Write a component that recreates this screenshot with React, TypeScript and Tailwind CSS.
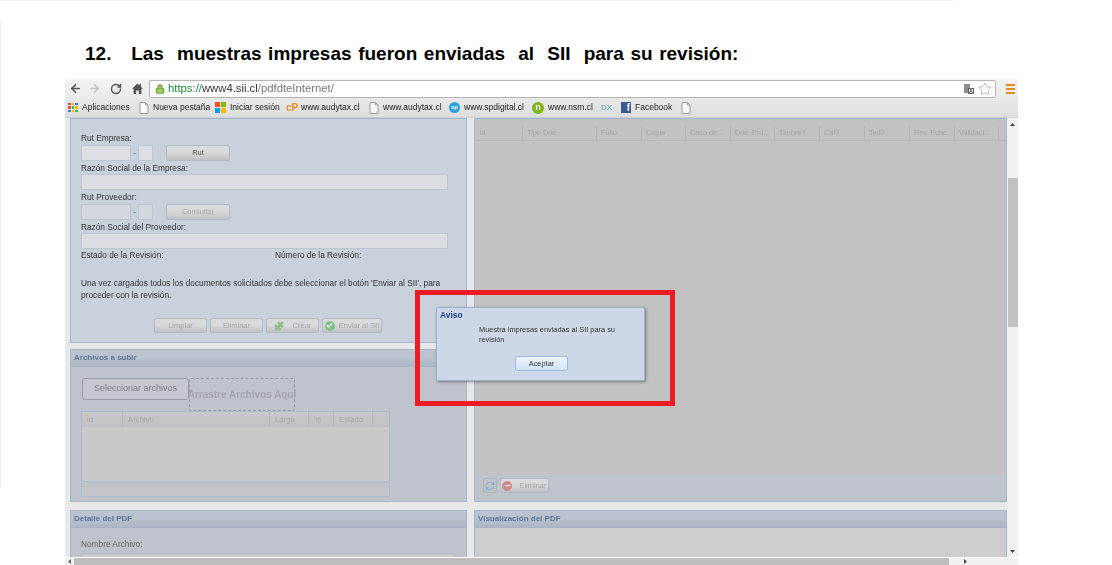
import { ArrowLeft, ArrowRight, Check, Lock, Minus, Puzzle, RefreshCw, RotateCw, Star } from "lucide-react";

const UI = "font-['Liberation_Sans',Arial,sans-serif]";

const gridCols = [
  { label: "id", cls: "w-[47px]" },
  { label: "Tipo Doc.", cls: "w-[74px]" },
  { label: "Folio", cls: "w-[45px]" },
  { label: "Copia", cls: "w-[44px]" },
  { label: "Caso de...", cls: "w-[45px]" },
  { label: "Doc. Pru...", cls: "w-[44px]" },
  { label: "Timbre?", cls: "w-[45px]" },
  { label: "Caf?", cls: "w-[45px]" },
  { label: "Ted?", cls: "w-[45px]" },
  { label: "Rev. Func.", cls: "w-[45px]" },
  { label: "Validaci...", cls: "w-[44px]" },
];

const uploadCols = [
  { label: "id", cls: "w-[41px]" },
  { label: "Archivo", cls: "w-[147px]" },
  { label: "Largo", cls: "w-[39px]" },
  { label: "%", cls: "w-[25px]" },
  { label: "Estado", cls: "w-[39px]" },
  { label: "", cls: "w-[17px]" },
];

function DocIcon() {
  return (
    <svg width="10" height="12" viewBox="0 0 10 12" className="shrink-0">
      <path d="M1 .5h5.5L9 3v8.5H1z" fill="#fafafa" stroke="#9a9a9a" />
      <path d="M6.5.5V3H9" fill="none" stroke="#9a9a9a" />
    </svg>
  );
}

function Bookmark({ icon, text, cls }: { icon: React.ReactNode; text: string; cls: string }) {
  return (
    <div className={`flex items-center gap-[4px] shrink-0 ${cls}`}>
      {icon}
      <span className="text-[8.5px] text-[#222] whitespace-nowrap">{text}</span>
    </div>
  );
}

function AppsIcon() {
  const colors = ["#e8453c", "#f4b400", "#3a7ee0", "#e8453c", "#3cba54", "#f4b400", "#3a7ee0", "#f4b400", "#3cba54"];
  return (
    <div className="grid grid-cols-3 gap-[1px] w-[10px] h-[10px] shrink-0">
      {colors.map((c, i) => (
        <div key={i} className="w-[2.5px] h-[2.5px]" style={{ background: c }} />
      ))}
    </div>
  );
}

function WinIcon() {
  return (
    <div className="grid grid-cols-2 gap-[1px] w-[11px] h-[11px] shrink-0">
      <div className="bg-[#f25022]" />
      <div className="bg-[#7fba00]" />
      <div className="bg-[#00a4ef]" />
      <div className="bg-[#ffb900]" />
    </div>
  );
}

function HomeIcon() {
  return (
    <svg width="11" height="11" viewBox="0 0 11 11" className="ml-[10px] shrink-0">
      <path d="M5.5.5 0 5.8h1.6V11h2.6V7.4h2.6V11h2.6V5.8H11L9 3.8V1H7.6v1.4z" fill="#555" />
    </svg>
  );
}

function TranslateIcon() {
  return (
    <div className="relative w-[10px] h-[10px]">
      <div className="absolute left-0 top-0 w-[6px] h-[9px] bg-[#8d8d8d]" />
      <div className="absolute right-0 bottom-0 w-[6px] h-[6px] border border-[#666] bg-[#e4e4e4] text-[5px] leading-[5px] text-center text-[#333]">A</div>
    </div>
  );
}

function Toolbar() {
  return (
    <div className="h-[19px] bg-gradient-to-b from-[#f3f3f3] to-[#ebebeb] flex items-center">
      <ArrowLeft size={13} strokeWidth={3} className="ml-[4px] text-[#555]" />
      <ArrowRight size={13} strokeWidth={3} className="ml-[6px] text-[#c4c4c4]" />
      <RotateCw size={12} strokeWidth={3} className="ml-[9px] text-[#555]" />
      <HomeIcon />
      <div className="ml-[6px] w-[847px] h-[18px] bg-white border border-[#b5b5b5] rounded-[2px] flex items-center pl-[5px]">
        <Lock size={10} strokeWidth={2.5} fill="#9ccc65" className="text-[#6f9e3a]" />
        <span className="ml-[3px] text-[11.3px] leading-none whitespace-nowrap">
          <span className="text-[#1e8e3e]">https://</span>
          <span className="text-[#333]">www4.sii.cl</span>
          <span className="text-[#777]">/pdfdteInternet/</span>
        </span>
        <div className="ml-auto mr-[3px] flex items-center gap-[4px]">
          <TranslateIcon />
          <Star size={14} strokeWidth={1} className="text-[#888]" />
        </div>
      </div>
      <div className="ml-[10px] w-[9px] flex flex-col gap-[2px]">
        <div className="h-[2px] bg-[#e98a1d]" />
        <div className="h-[2px] bg-[#e98a1d]" />
        <div className="h-[2px] bg-[#e98a1d]" />
      </div>
    </div>
  );
}

function BookmarksBar() {
  return (
    <div className="h-[20px] bg-gradient-to-b from-[#e9e9e9] to-[#dedede] flex items-center pl-[3px] border-b border-[#d0d0d0]">
      <Bookmark cls="w-[71px]" icon={<AppsIcon />} text="Aplicaciones" />
      <Bookmark cls="w-[76px]" icon={<DocIcon />} text="Nueva pestaña" />
      <Bookmark cls="w-[71px]" icon={<WinIcon />} text="Iniciar sesión" />
      <Bookmark
        cls="w-[83px]"
        icon={<span className="text-[10px] font-bold text-[#f08a1d] leading-none w-[11px]">cP</span>}
        text="www.audytax.cl"
      />
      <Bookmark cls="w-[80px]" icon={<DocIcon />} text="www.audytax.cl" />
      <Bookmark
        cls="w-[83px]"
        icon={<div className="w-[11px] h-[11px] rounded-full bg-[#2a9fe0] text-white text-[6px] font-bold leading-[11px] text-center">sp</div>}
        text="www.spdigital.cl"
      />
      <Bookmark
        cls="w-[69px]"
        icon={<div className="w-[12px] h-[12px] rounded-full bg-[#7cb518] text-white text-[9px] font-bold leading-[11px] text-center">n</div>}
        text="www.nsm.cl"
      />
      <div className="w-[20px] shrink-0 text-[8px] text-[#45aacb] leading-none">DX</div>
      <Bookmark
        cls="w-[60px]"
        icon={<div className="w-[10px] h-[11px] bg-[#3b5998] text-white text-[10px] font-bold leading-[12px] text-right pr-[1px]">f</div>}
        text="Facebook"
      />
      <DocIcon />
    </div>
  );
}

function FlatButton({ label, cls, disabled, icon }: { label: string; cls: string; disabled?: boolean; icon?: React.ReactNode }) {
  return (
    <div className={`rounded-[2px] border border-[#b4bac3] bg-gradient-to-b from-[#d9dcdf] via-[#d6d8da] to-[#bfc2c5] flex items-center justify-center gap-[4px] text-[7.5px] whitespace-nowrap ${disabled ? "text-[#a3a6aa]" : "text-[#555]"} ${cls}`}>
      {icon}
      <span>{label}</span>
    </div>
  );
}

function Label({ children, cls }: { children: React.ReactNode; cls: string }) {
  return <div className={`text-[8.3px] leading-[12px] text-[#333] ${cls}`}>{children}</div>;
}

function RutRow({ button, disabled, cls }: { button: string; disabled?: boolean; cls: string }) {
  const field = disabled ? "bg-[#d3d8df]" : "bg-[#dce0e5]";
  return (
    <div className={`flex items-center h-[16px] ${cls}`}>
      <div className={`w-[50px] h-[16px] border border-[#bdc5d0] ${field}`} />
      <span className="w-[7px] text-center text-[8px] text-[#555]">-</span>
      <div className={`w-[15px] h-[16px] border border-[#bdc5d0] ${field}`} />
      <FlatButton label={button} disabled={disabled} cls="ml-[13px] w-[64px] h-[16px]" />
    </div>
  );
}

function TopPanel() {
  return (
    <div className="h-[225px] bg-[#c9d1dd] border border-[#a3b6d1] pl-[10px] pr-[16px] pt-[13px]">
      <Label cls="">Rut Empresa:</Label>
      <RutRow button="Rut" cls="mt-[1px]" />
      <Label cls="mt-[1px]">Razón Social de la Empresa:</Label>
      <div className="h-[16px] w-[367px] bg-[#dadee3] border border-[#bdc5d0]" />
      <Label cls="mt-[1px]">Rut Proveedor:</Label>
      <RutRow button="Consultar" disabled cls="mt-[1px]" />
      <Label cls="mt-[1px]">Razón Social del Proveedor:</Label>
      <div className="h-[16px] w-[367px] bg-[#dadee3] border border-[#bdc5d0]" />
      <div className="flex">
        <Label cls="w-[194px]">Estado de la Revisión:</Label>
        <Label cls="">Número de la Revisión:</Label>
      </div>
      <Label cls="mt-[16px] w-[370px] leading-[10px]">
        Una vez cargados todos los documentos solicitados debe seleccionar el botón 'Enviar al SII', para proceder con la revisión.
      </Label>
      <div className="mt-[17px] ml-[73px] flex gap-[3px]">
        <FlatButton label="Limpiar" disabled cls="w-[53px] h-[15px]" />
        <FlatButton label="Eliminar" disabled cls="w-[53px] h-[15px]" />
        <FlatButton
          label="Crear"
          disabled
          cls="w-[53px] h-[15px]"
          icon={<Puzzle size={10} fill="#8fbf8a" strokeWidth={1} className="text-[#7fae7a] mr-[5px]" />}
        />
        <FlatButton
          label="Enviar al SII"
          disabled
          cls="w-[60px] h-[15px] gap-[3px]"
          icon={
            <div className="w-[10px] h-[10px] rounded-full bg-[#7fc08a] flex items-center justify-center">
              <Check size={7} strokeWidth={4} className="text-white" />
            </div>
          }
        />
      </div>
    </div>
  );
}

function PanelHeader({ title }: { title: string }) {
  return (
    <div className="h-[17px] bg-gradient-to-b from-[#bcc4d0] via-[#b9c2cf] to-[#abb6c6] flex items-center pl-[3px] border-b border-[#a8b4c6]">
      <span className="text-[8px] font-bold text-[#5a7396] whitespace-nowrap">{title}</span>
    </div>
  );
}

function UploadPanel() {
  return (
    <div className="h-[153px] bg-[#bfc3cc] border border-[#a9b4c4] overflow-hidden">
      <PanelHeader title="Archivos a subir" />
      <div className="pl-[10px]">
        <div className="flex items-start pt-[11px] h-[44px]">
          <div className="w-[107px] h-[22px] ml-[1px] border border-[#969ca6] rounded-[3px] bg-[#c5c8ce] flex items-center justify-center text-[9px] text-[#7d7f84]">
            Seleccionar archivos
          </div>
          <div className="w-[106px] h-[33px] border border-dashed border-[#969ca6] rounded-[2px] flex items-center justify-center text-[10px] font-bold text-[#a3a6ab] whitespace-nowrap">
            Arrastre Archivos Aquí
          </div>
        </div>
        <div className="w-[309px] h-[86px] border border-[#aebad0] bg-[#c9c9c9] flex flex-col">
          <div className="h-[15px] flex bg-gradient-to-b from-[#c8c9ca] to-[#bfc1c4] border-b border-[#bdbfc2]">
            {uploadCols.map((c) => (
              <div key={c.label} className={`${c.cls} shrink-0 pl-[5px] border-r border-[#b6b8bb] text-[7.8px] leading-[15px] text-[#a5a7aa]`}>
                {c.label}
              </div>
            ))}
          </div>
          <div className="flex-1" />
          <div className="h-[15px] bg-gradient-to-b from-[#bdc1c7] to-[#c4c7cb] border-t border-[#a8b8d2]" />
        </div>
      </div>
    </div>
  );
}

function DetailPanel() {
  return (
    <div className="flex-1 bg-[#bfc3cc] border border-b-0 border-[#a9b4c4] overflow-hidden">
      <PanelHeader title="Detalle del PDF" />
      <Label cls="ml-[10px] mt-[10px] text-[#666]">Nombre Archivo:</Label>
      <div className="ml-[10px] mt-[3px] w-[374px] h-[10px] bg-[#c9cacc] border border-[#b8bcc4]" />
    </div>
  );
}

function GridPanel() {
  return (
    <div className="h-[384px] bg-[#bfc3cc] border border-[#a3b6d1] flex flex-col">
      <div className="h-[355px] ml-[1px] bg-[#c2c2c2] pt-[7px]">
        <div className="h-[15px] flex border-b border-[#b8b8b8]">
          {gridCols.map((c) => (
            <div key={c.label} className={`${c.cls} shrink-0 pl-[4px] border-r border-[#b5b5b5] text-[7.3px] leading-[14px] text-[#a3a3a3] whitespace-nowrap`}>
              {c.label}
            </div>
          ))}
        </div>
      </div>
      <div className="flex items-center gap-[3px] pl-[8px] mt-[4px]">
        <div className="w-[14px] h-[15px] border border-[#aeb2b9] rounded-[2px] flex items-center justify-center">
          <RefreshCw size={10} strokeWidth={2} className="text-[#7ea6cf]" />
        </div>
        <FlatButton
          label="Eliminar"
          disabled
          cls="w-[49px] h-[15px]"
          icon={
            <div className="w-[10px] h-[10px] rounded-full bg-[#d08a85] flex items-center justify-center mr-[3px]">
              <Minus size={7} strokeWidth={4} className="text-white" />
            </div>
          }
        />
      </div>
    </div>
  );
}

function ViewerPanel() {
  return (
    <div className="flex-1 bg-[#cdcdcd] border border-b-0 border-[#a3b6d1] overflow-hidden">
      <PanelHeader title="Visualización del PDF" />
    </div>
  );
}

function VScrollbar() {
  return (
    <div className="w-[11px] bg-[#f1f1f1] flex flex-col items-center">
      <svg width="7" height="5" viewBox="0 0 7 5" className="mt-[4px]">
        <path d="M3.5 1 6 4H1z" fill="#444" />
      </svg>
      <div className="mt-[51px] w-[10px] ml-[1px] h-[149px] bg-[#c1c1c1]" />
      <div className="flex-1" />
      <svg width="7" height="5" viewBox="0 0 7 5" className="mb-[3px]">
        <path d="M3.5 4 6 1H1z" fill="#444" />
      </svg>
    </div>
  );
}

function HScrollbar() {
  return (
    <div className="h-[8px] border-t border-white bg-[#f1f1f1] flex items-center">
      <svg width="5" height="7" viewBox="0 0 5 7" className="ml-[2px]">
        <path d="M1 3.5 4 1v5z" fill="#666" />
      </svg>
      <div className="ml-[2px] w-[875px] h-[7px] bg-[#bdbdbd]" />
      <svg width="5" height="7" viewBox="0 0 5 7" className="ml-[14px]">
        <path d="M4 3.5 1 1v5z" fill="#444" />
      </svg>
    </div>
  );
}

export default function App() {
  return (
    <div className={`relative w-[1112px] h-[565px] overflow-hidden bg-white ${UI}`}>
      <div className="h-[1px] w-[955px] bg-[#f4f4f4]" />
      <div className="h-[78px] pl-[85px] pt-[41px]">
        <h1 className="text-[19px] leading-[24px] font-bold text-black whitespace-pre [word-spacing:1.3px]">
          12.   Las  muestras impresas fueron enviadas  al  SII  para su revisión:
        </h1>
      </div>

      <div className="ml-[65px] w-[953px] h-[486px] flex flex-col blur-[0.3px]">
        <Toolbar />
        <BookmarksBar />
        <div className="flex-1 flex min-h-0">
          <div className="w-[942px] bg-[#e8e8e8] flex pl-[5px] gap-[7px]">
            <div className="w-[397px] flex flex-col">
              <TopPanel />
              <div className="mt-[6px]">
                <UploadPanel />
              </div>
              <div className="mt-[8px] flex-1 flex min-h-0 flex-col">
                <DetailPanel />
              </div>
            </div>
            <div className="w-[533px] flex flex-col">
              <GridPanel />
              <div className="mt-[8px] flex-1 flex min-h-0 flex-col">
                <ViewerPanel />
              </div>
            </div>
          </div>
          <VScrollbar />
        </div>
        <HScrollbar />
      </div>

      {/* faint page edge left over from the document */}
      <div className="absolute left-0 top-[20px] w-[1px] h-[468px] bg-[#eeeeee]" />

      {/* red highlight box drawn over the screenshot */}
      <div className="absolute left-[415px] top-[290px] w-[260px] h-[116px] border-[5px] border-[#ed1c24]" />

      {/* Aviso dialog */}
      <div className="absolute left-[436px] top-[307px] w-[209px] h-[74px] bg-[#ccd8e7] border border-[#9fb2cc] rounded-[2px] shadow-[1px_1px_3px_rgba(0,0,0,0.4)] blur-[0.3px]">
        <div className="pl-[3px] pt-[1px] text-[8.4px] leading-[12px] font-bold text-[#15428b]">Aviso</div>
        <div className="ml-[42px] mt-[4px] w-[150px] text-[7.4px] leading-[10px] text-[#333]">
          Muestra impresas enviadas al SII para su revisión
        </div>
        <div className="mt-[11px] ml-[78px] w-[53px] h-[15px] rounded-[2px] border border-[#9dbbe0] bg-gradient-to-b from-[#eef6fd] to-[#cfe3f6] flex items-center justify-center text-[7.4px] text-[#333]">
          Aceptar
        </div>
      </div>
    </div>
  );
}
